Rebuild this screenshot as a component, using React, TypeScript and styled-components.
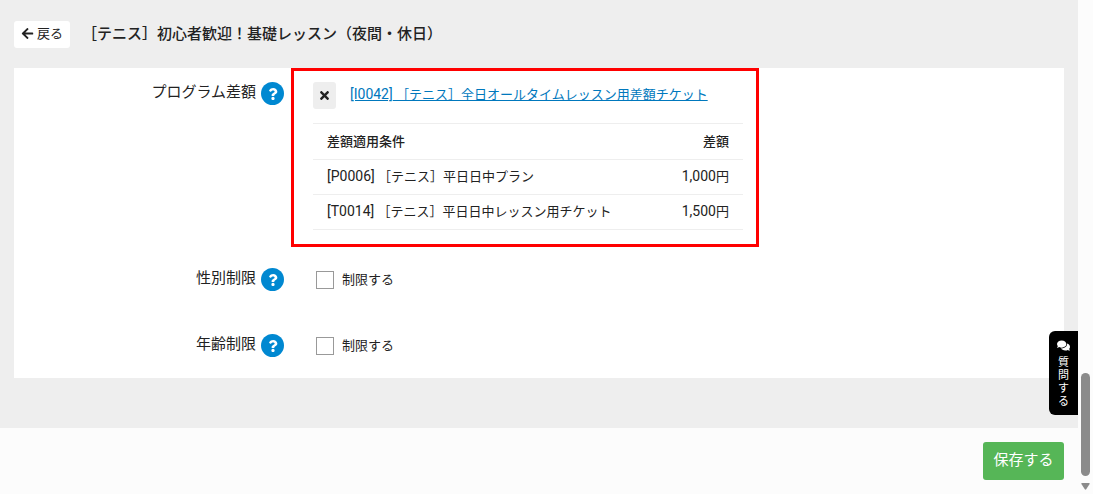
import React from 'react';
import styled, { createGlobalStyle } from 'styled-components';
import { FaArrowLeft, FaComments, FaQuestion, FaTimes } from 'react-icons/fa';

const GlobalStyle = createGlobalStyle`
  *, *::before, *::after { box-sizing: border-box; }
  body {
    margin: 0;
    background: #eee;
    color: #222;
    font: 13px/20px Roboto, 'Noto Sans CJK JP', sans-serif;
  }
  button, input { font: inherit; color: inherit; }
`;

const Page = styled.div`
  display: flex;
  height: 100vh;
  overflow: hidden;
`;

const Content = styled.div`
  position: relative;
  flex: 1;
  min-width: 0;
  display: flex;
  flex-direction: column;
`;

const Main = styled.main`
  flex: 1;
  padding: 0 14px;
`;

const Header = styled.header`
  display: flex;
  align-items: center;
  gap: 12px;
  height: 68px;
`;

const BackButton = styled.button`
  display: flex;
  align-items: center;
  justify-content: center;
  gap: 3px;
  width: 56px;
  height: 27px;
  padding: 0 0 1px;
  border: 0;
  border-radius: 3px;
  background: #fff;
  line-height: 20px;
`;

const Title = styled.h1`
  margin: 0;
  font-size: 15px;
  font-weight: 500;
  line-height: 20px;
`;

const Panel = styled.form`
  display: flex;
  flex-direction: column;
  padding-bottom: 21px;
  background: #fff;
`;

const Row = styled.div<{ $gap?: number }>`
  display: grid;
  grid-template-columns: 270px minmax(0, 1fr);
  column-gap: 7px;
  margin-top: ${(p) => p.$gap ?? 0}px;
`;

const LabelCell = styled.div<{ $top?: number }>`
  display: flex;
  justify-content: flex-end;
  align-items: center;
  align-self: start;
  gap: 5px;
  height: 23px;
  margin-top: ${(p) => p.$top ?? 0}px;
  font-size: 15px;
`;

const LabelText = styled.span`
  padding-bottom: 3px;
`;

const HelpButton = styled.button`
  display: grid;
  place-items: center;
  width: 23px;
  height: 23px;
  padding: 0;
  border: 0;
  border-radius: 50%;
  background: #0088d1;
  color: #fff;
`;

const Highlight = styled.div`
  max-width: 468px;
  padding: 11px 13px 14px 19px;
  border: 3px solid #f00;
`;

const TicketLine = styled.div`
  display: flex;
  align-items: center;
  gap: 14px;
  margin-bottom: 14px;
`;

const RemoveButton = styled.button`
  display: grid;
  place-items: center;
  width: 23px;
  height: 27px;
  padding: 0;
  border: 0;
  border-radius: 3px;
  background: #eee;
`;

const TicketLink = styled.a`
  padding-bottom: 3px;
  color: #0078bd;
  text-decoration: underline;
`;

const Latin = styled.span`
  font-size: 14px;
`;

const Table = styled.table`
  width: 100%;
  border-collapse: collapse;
  border-top: 1px solid #eee;
`;

const TableRow = styled.tr`
  border-bottom: 1px solid #eee;
`;

const HeadCell = styled.th<{ $end?: boolean }>`
  height: 36px;
  padding: 0 14px;
  font-weight: 500;
  text-align: ${(p) => (p.$end ? 'right' : 'left')};
`;

const Cell = styled.td<{ $end?: boolean }>`
  height: 35px;
  padding: 0 14px 2px;
  text-align: ${(p) => (p.$end ? 'right' : 'left')};
`;

const CheckLabel = styled.label`
  display: flex;
  align-items: center;
  gap: 8px;
  height: 23px;
  padding-left: 25px;
`;

const Checkbox = styled.input`
  appearance: none;
  width: 18px;
  height: 18px;
  margin: 0;
  border: 1px solid #999;
  background: #fff;
`;

const Footer = styled.footer`
  display: flex;
  justify-content: flex-end;
  padding: 14px;
  background: #fcfcfc;
`;

const SaveButton = styled.button`
  width: 81px;
  height: 38px;
  padding: 0 0 3px;
  border: 0;
  border-radius: 3px;
  background: #56b657;
  color: #fff;
  font-size: 15px;
`;

const ChatTab = styled.button`
  position: absolute;
  right: 0;
  bottom: 79px;
  display: flex;
  flex-direction: column;
  align-items: center;
  gap: 4px;
  width: 29px;
  height: 84px;
  padding: 8px 0 0;
  border: 0;
  border-radius: 6px 0 0 6px;
  background: #000;
  color: #fff;
  font-size: 11px;
  line-height: 13px;
`;

const ChatText = styled.span`
  width: 11px;
`;

const ScrollTrack = styled.div`
  display: flex;
  flex-direction: column;
  align-items: center;
  justify-content: flex-end;
  gap: 7px;
  width: 15px;
  padding-bottom: 4px;
  background: #fcfcfc;
`;

const ScrollThumb = styled.div`
  width: 9px;
  height: 103px;
  border-radius: 5px;
  background: #8b8b8b;
`;

function Help({ name }: { name: string }) {
  return (
    <HelpButton type="button" aria-label={name}>
      <FaQuestion size={12} />
    </HelpButton>
  );
}

const fees = [
  { code: '[P0006]', name: '［テニス］平日日中プラン', amount: '1,000' },
  { code: '[T0014]', name: '［テニス］平日日中レッスン用チケット', amount: '1,500' },
];

const limits = [
  { id: 'gender', label: '性別制限', gap: 21 },
  { id: 'age', label: '年齢制限', gap: 43 },
];

export default function App() {
  return (
    <>
      <GlobalStyle />
      <Page>
        <Content>
          <Main>
            <Header>
              <BackButton type="button">
                <FaArrowLeft size={13} />
                戻る
              </BackButton>
              <Title>［テニス］初心者歓迎！基礎レッスン（夜間・休日）</Title>
            </Header>
            <Panel>
              <Row>
                <LabelCell $top={14}>
                  <LabelText>プログラム差額</LabelText>
                  <Help name="プログラム差額" />
                </LabelCell>
                <Highlight>
                  <TicketLine>
                    <RemoveButton type="button" aria-label="削除">
                      <FaTimes size={13} />
                    </RemoveButton>
                    <TicketLink href="#">
                      <Latin>[I0042]</Latin> ［テニス］全日オールタイムレッスン用差額チケット
                    </TicketLink>
                  </TicketLine>
                  <Table>
                    <thead>
                      <TableRow>
                        <HeadCell scope="col">差額適用条件</HeadCell>
                        <HeadCell scope="col" $end>差額</HeadCell>
                      </TableRow>
                    </thead>
                    <tbody>
                      {fees.map((fee) => (
                        <TableRow key={fee.code}>
                          <Cell>
                            <Latin>{fee.code}</Latin> {fee.name}
                          </Cell>
                          <Cell $end>
                            <Latin>{fee.amount}</Latin>円
                          </Cell>
                        </TableRow>
                      ))}
                    </tbody>
                  </Table>
                </Highlight>
              </Row>
              {limits.map((limit) => (
                <Row key={limit.id} $gap={limit.gap}>
                  <LabelCell>
                    <LabelText id={limit.id + '-label'}>{limit.label}</LabelText>
                    <Help name={limit.label} />
                  </LabelCell>
                  <CheckLabel htmlFor={limit.id}>
                    <Checkbox type="checkbox" id={limit.id} aria-describedby={limit.id + '-label'} />
                    制限する
                  </CheckLabel>
                </Row>
              ))}
            </Panel>
          </Main>
          <Footer>
            <SaveButton type="button">保存する</SaveButton>
          </Footer>
          <ChatTab type="button">
            <FaComments size={13} />
            <ChatText>質問する</ChatText>
          </ChatTab>
        </Content>
        <ScrollTrack aria-hidden="true">
          <ScrollThumb />
          <svg width="9" height="7" viewBox="0 0 9 7">
            <path d="M1 0h7q1 0 .6 1L5.2 6.2q-.7.9-1.4 0L.4 1Q0 0 1 0z" fill="#8b8b8b" />
          </svg>
        </ScrollTrack>
      </Page>
    </>
  );
}
